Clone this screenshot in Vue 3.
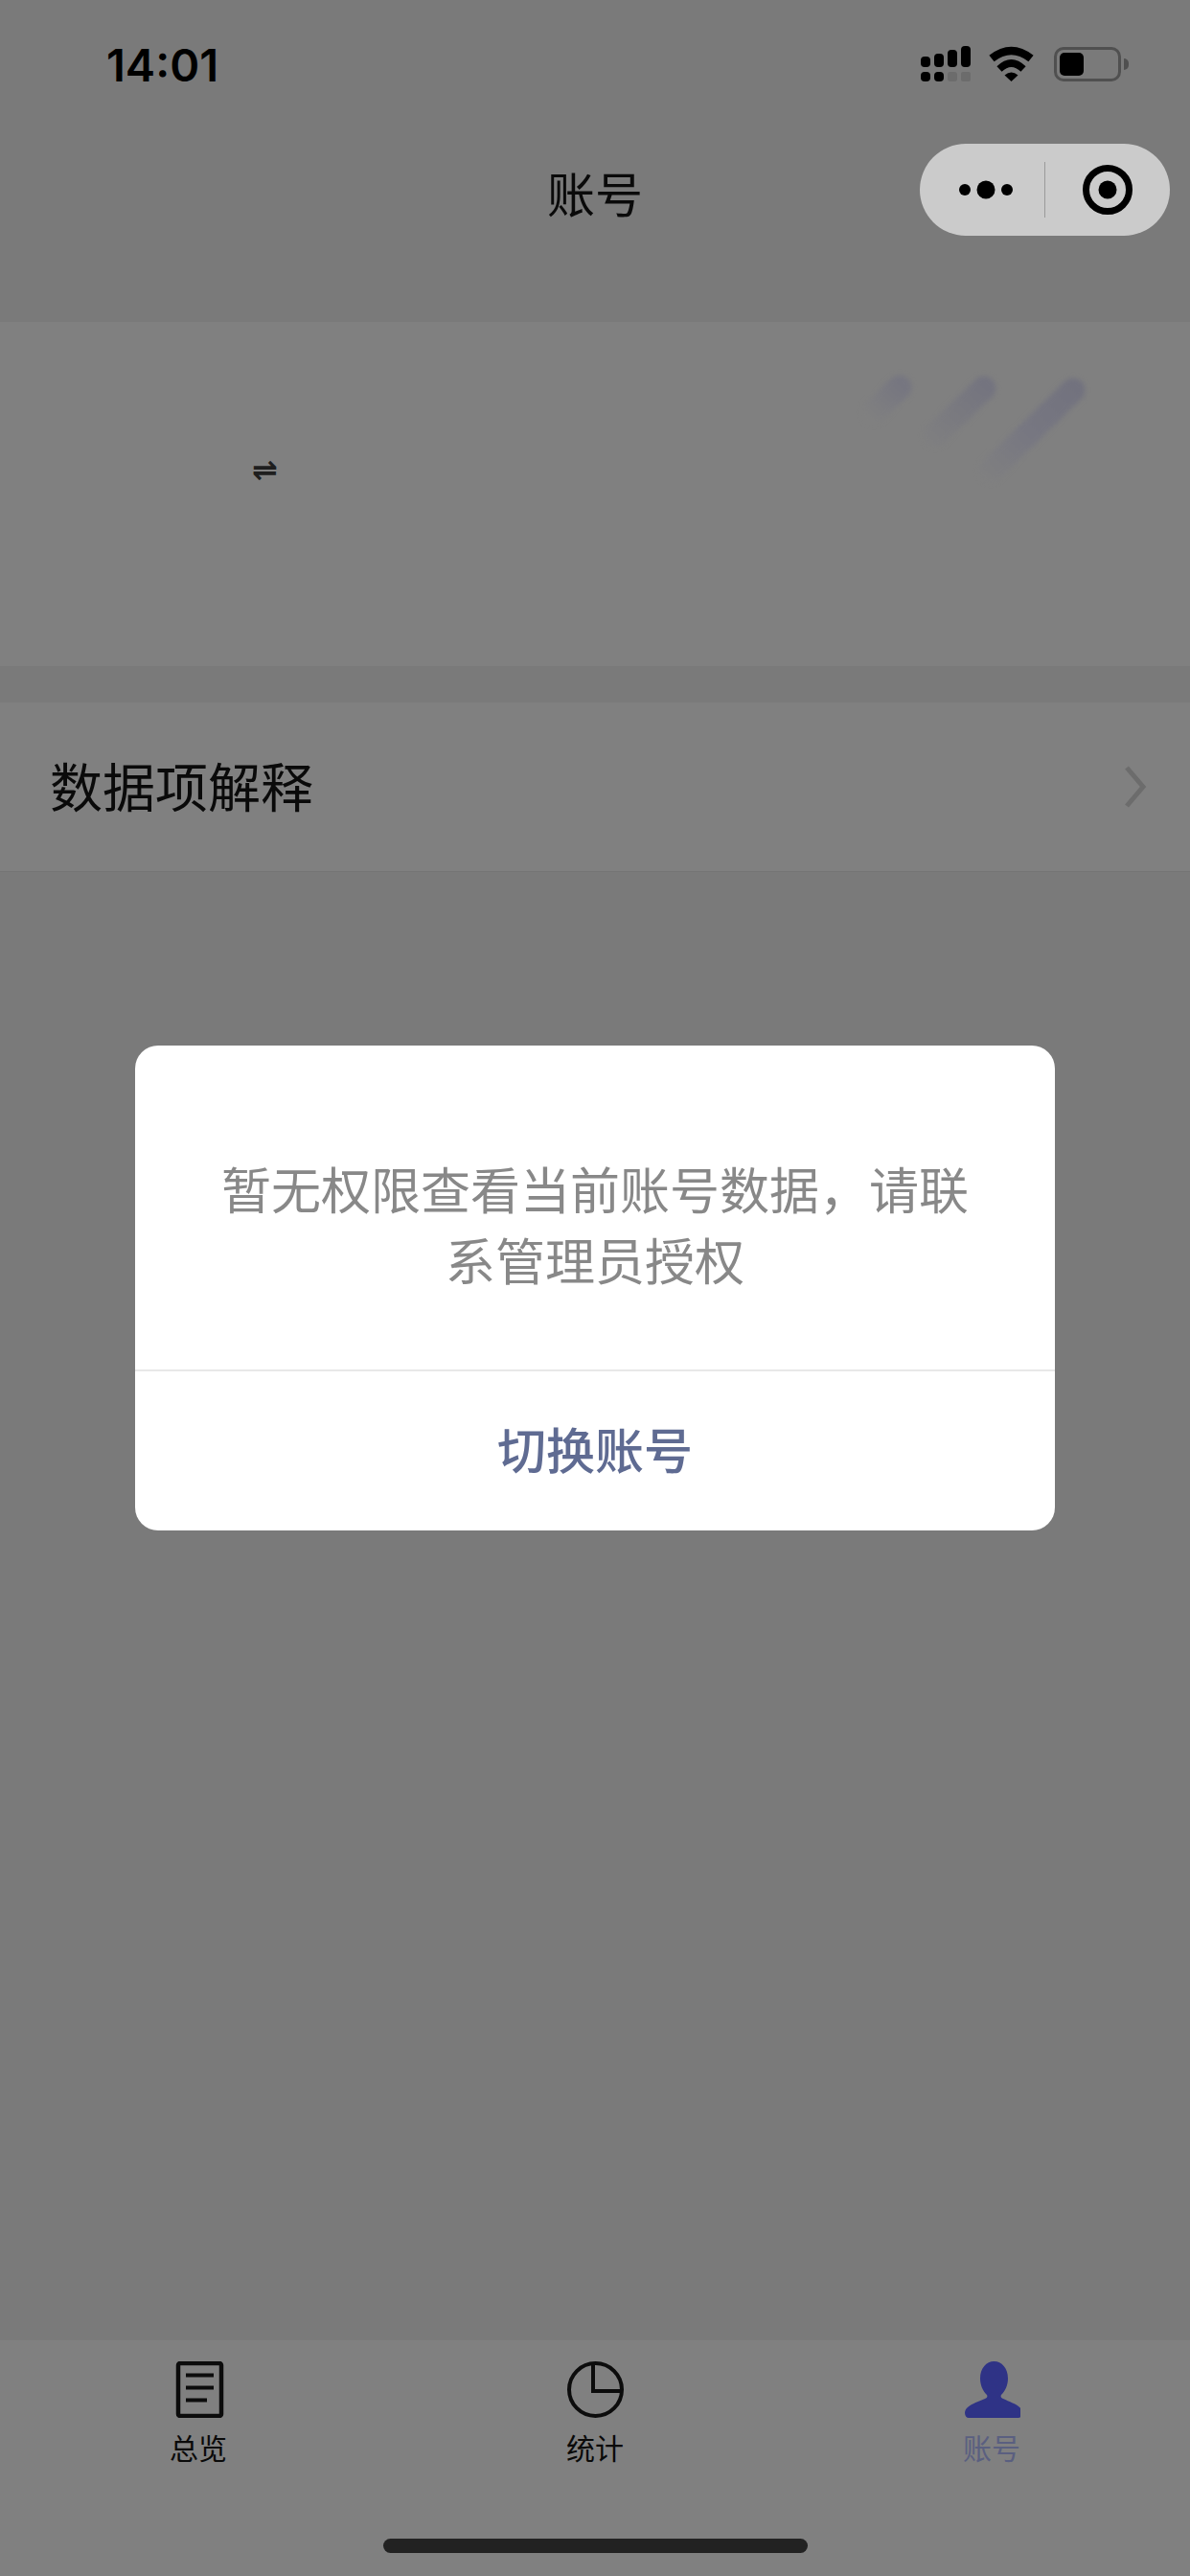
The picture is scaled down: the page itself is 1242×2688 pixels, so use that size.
<script setup>
const tabs = [
  { key: "overview", label: "总览" },
  { key: "stats", label: "统计" },
  { key: "account", label: "账号", active: true },
];
</script>

<template>
  <div class="page">
    <header class="header">
      <div class="status-bar">
        <span class="time">14:01</span>
        <div class="status-icons">
          <svg class="signal" width="51" height="37" viewBox="0 0 51 37">
            <rect x="0" y="11" width="10" height="11" rx="4" />
            <rect x="14" y="8" width="10" height="14" rx="4" />
            <rect x="28" y="4" width="10" height="18" rx="4" />
            <rect x="42" y="0" width="10" height="22" rx="4" />
            <rect x="0" y="27" width="10" height="10" rx="4" />
            <rect x="14" y="27" width="10" height="10" rx="4" />
            <rect x="28" y="27" width="10" height="10" rx="3" fill="#6c6c6c" />
            <rect x="42" y="27" width="10" height="10" rx="2" fill="#6c6c6c" />
          </svg>
          <svg class="wifi" width="47" height="37" viewBox="0 0 47 37">
            <path d="M3 13Q23.500-3 44 13" fill="none" stroke="#000" stroke-width="8.500" />
            <path d="M11 24Q23.500 12 36 24" fill="none" stroke="#000" stroke-width="7.500" />
            <path d="M16.500 30.500Q23.500 24.500 30.500 30.500L23.500 37Z" />
          </svg>
          <div class="battery">
            <div class="battery-level"></div>
            <div class="battery-cap"></div>
          </div>
        </div>
      </div>
      <div class="nav-bar">
        <span></span>
        <h1 class="nav-title">账号</h1>
        <div class="capsule">
          <div class="capsule-half">
            <svg class="dots" width="56" height="20" viewBox="0 0 56 20">
              <circle cx="6" cy="10" r="6" />
              <circle cx="28" cy="10" r="9.5" />
              <circle cx="50" cy="10" r="6" />
            </svg>
          </div>
          <div class="capsule-line"></div>
          <div class="capsule-half">
            <svg width="52" height="52" viewBox="0 0 52 52">
              <circle cx="26" cy="26" r="22.5" fill="none" stroke="#000" stroke-width="7" />
              <circle cx="26" cy="26" r="9.5" />
            </svg>
          </div>
        </div>
      </div>
    </header>

    <section class="account-card">
      <span class="swap">⇌</span>
      <svg class="brush" width="240" height="120" viewBox="0 0 240 120">
        <defs>
          <linearGradient id="fade" gradientUnits="userSpaceOnUse" x1="210" y1="10" x2="115" y2="115">
            <stop offset="0" stop-color="#72727e" />
            <stop offset="0.5" stop-color="#777781" />
            <stop offset="1" stop-color="#808080" />
          </linearGradient>
          <linearGradient id="fade2" gradientUnits="userSpaceOnUse" x1="115" y1="10" x2="55" y2="80">
            <stop offset="0" stop-color="#74747f" />
            <stop offset="1" stop-color="#808080" />
          </linearGradient>
          <linearGradient id="fade3" gradientUnits="userSpaceOnUse" x1="27" y1="10" x2="-5" y2="45">
            <stop offset="0" stop-color="#767680" />
            <stop offset="1" stop-color="#808080" />
          </linearGradient>
        </defs>
        <g fill="none" stroke-width="25" stroke-linecap="round">
          <path d="M27 14L0 40" stroke="url(#fade3)" />
          <path d="M115 15L64 64" stroke="url(#fade2)" />
          <path d="M208 17L122 101" stroke="url(#fade)" />
        </g>
      </svg>
    </section>

    <div class="explain-row">
      <span class="explain-text">数据项解释</span>
      <svg width="24" height="44" viewBox="0 0 24 44">
        <path d="M3 2L20 22L3 42" fill="none" stroke="#6c6c6c" stroke-width="5" />
      </svg>
    </div>

    <div class="spacer"></div>

    <footer class="tab-bar">
      <div class="tabs">
        <div v-for="tab in tabs" :key="tab.key" class="tab" :class="{ active: tab.active }">
          <svg v-if="tab.key === 'overview'" width="60" height="59" viewBox="0 0 60 59">
            <rect x="9" y="2" width="45" height="55" rx="2" fill="none" stroke="#0c0c0c" stroke-width="4.500" />
            <path d="M17 14.500H46M17 27.500H46M17 40.500H39" fill="none" stroke="#0c0c0c" stroke-width="4" />
          </svg>
          <svg v-else-if="tab.key === 'stats'" width="60" height="59" viewBox="0 0 60 59">
            <circle cx="30.500" cy="29.500" r="27.500" fill="none" stroke="#0c0c0c" stroke-width="4" />
            <path d="M28 2V31H57" fill="none" stroke="#0c0c0c" stroke-width="4" />
          </svg>
          <svg v-else width="60" height="59" viewBox="-2 0 60 59">
            <path
              fill="#2f3386"
              d="M30.500 0C38.500 0 45 7 45 18C45 25 42 31 38 35C37 37 38 38 40 39C48 43 60 46 60 54C60 57 58 59 56 59L4 59C2 59 0 57 0 54C0 46 12 43 21 39C23 38 24 37 23 35C19 31 16 25 16 18C16 7 22.500 0 30.500 0Z"
            />
          </svg>
          <span class="tab-label">{{ tab.label }}</span>
        </div>
      </div>
      <div class="home-indicator"></div>
    </footer>

    <div class="dialog-layer">
      <div class="dialog">
        <p class="dialog-text">暂无权限查看当前账号数据&#xFF0C;请联系管理员授权</p>
        <div class="dialog-action">切换账号</div>
      </div>
    </div>
  </div>
</template>

<style scoped>
.page {
  position: relative;
  display: flex;
  flex-direction: column;
  width: 1242px;
  height: 2688px;
  overflow: hidden;
  background: #7a7a7a;
  color: #0a0a0a;
  font-family: "Noto Sans CJK SC", "Liberation Sans", sans-serif;
}

.header {
  height: 336px;
  flex-shrink: 0;
}

.status-bar {
  display: flex;
  justify-content: space-between;
  align-items: flex-start;
  height: 150px;
  padding: 48px 72px 0 111px;
  box-sizing: border-box;
}

.time {
  font-family: Inter, "Liberation Sans", sans-serif;
  font-size: 47px;
  line-height: 40px;
  font-weight: 600;
  color: #000;
}

.status-icons {
  display: flex;
  align-items: flex-start;
  gap: 20px;
}

.status-icons svg {
  display: block;
  overflow: visible;
}

.battery {
  position: relative;
  width: 70px;
  height: 36px;
  margin: 1px 0 0 1px;
  padding: 3px;
  box-sizing: border-box;
  border: 3px solid #505050;
  border-radius: 10px;
}

.battery-level {
  width: 25px;
  height: 24px;
  background: #000;
  border-radius: 5px;
}

.battery-cap {
  position: absolute;
  top: 9px;
  right: -11px;
  width: 5px;
  height: 12px;
  background: #505050;
  border-radius: 0 6px 6px 0;
}

.nav-bar {
  display: grid;
  grid-template-columns: 1fr auto 1fr;
  align-items: center;
  height: 96px;
  padding: 0 21px;
}

.nav-title {
  margin: 4px 0 0;
  font-size: 50px;
  font-weight: 400;
  line-height: 60px;
}

.capsule {
  justify-self: end;
  display: flex;
  align-items: center;
  width: 261px;
  height: 96px;
  border-radius: 48px;
  background: #cbcbcb;
}

.capsule-half {
  flex: 1;
  display: flex;
  justify-content: center;
  align-items: center;
}

.capsule-half svg {
  display: block;
}

.capsule-half .dots {
  margin-left: 8px;
}

.capsule-line {
  width: 1px;
  height: 58px;
  background: #9a9a9a;
}

.account-card {
  position: relative;
  height: 359px;
  flex-shrink: 0;
  padding: 129px 0 0 263px;
  box-sizing: border-box;
  background: #808080;
}

.swap {
  display: block;
  width: 27px;
  font-family: "DejaVu Sans", sans-serif;
  font-size: 32px;
  font-weight: 700;
  line-height: 50px;
  color: #1e1e1e;
}

.brush {
  position: absolute;
  top: 54px;
  left: 912px;
  overflow: visible;
  filter: blur(2.5px);
}

.explain-row {
  display: flex;
  justify-content: space-between;
  align-items: center;
  height: 177px;
  flex-shrink: 0;
  margin-top: 38px;
  padding: 0 45px 0 52px;
  box-sizing: border-box;
  background: #808080;
  border-bottom: 1px solid #747474;
}

.explain-text {
  margin-bottom: 6px;
  font-size: 55px;
  line-height: 64px;
}

.explain-row svg {
  display: block;
}

.spacer {
  flex: 1;
}

.tab-bar {
  display: flex;
  flex-direction: column;
  align-items: center;
  height: 246px;
  flex-shrink: 0;
  box-sizing: border-box;
  padding-top: 22px;
  background: #808080;
}

.tabs {
  display: grid;
  grid-template-columns: repeat(3, 1fr);
  width: 100%;
}

.tab {
  display: flex;
  flex-direction: column;
  align-items: center;
  gap: 12px;
}

.tab svg {
  display: block;
}

.tab-label {
  font-size: 30px;
  line-height: 36px;
  color: #0a0a0a;
}

.tab.active .tab-label {
  color: #5a5f80;
}

.home-indicator {
  width: 443px;
  height: 15px;
  margin-top: 78px;
  border-radius: 8px;
  background: #222;
}

.dialog-layer {
  position: absolute;
  inset: 0;
  display: flex;
  justify-content: center;
  align-items: center;
}

.dialog {
  width: 960px;
  border-radius: 24px;
  background: #fff;
}

.dialog-text {
  margin: 0;
  padding: 112px 84px 78px;
  font-size: 52px;
  line-height: 74px;
  text-align: center;
  color: #888;
  border-bottom: 2px solid #e8e8e8;
}

.dialog-action {
  display: flex;
  justify-content: center;
  align-items: center;
  height: 160px;
  padding-bottom: 6px;
  font-size: 51px;
  font-weight: 500;
  color: #5f6b92;
}
</style>
